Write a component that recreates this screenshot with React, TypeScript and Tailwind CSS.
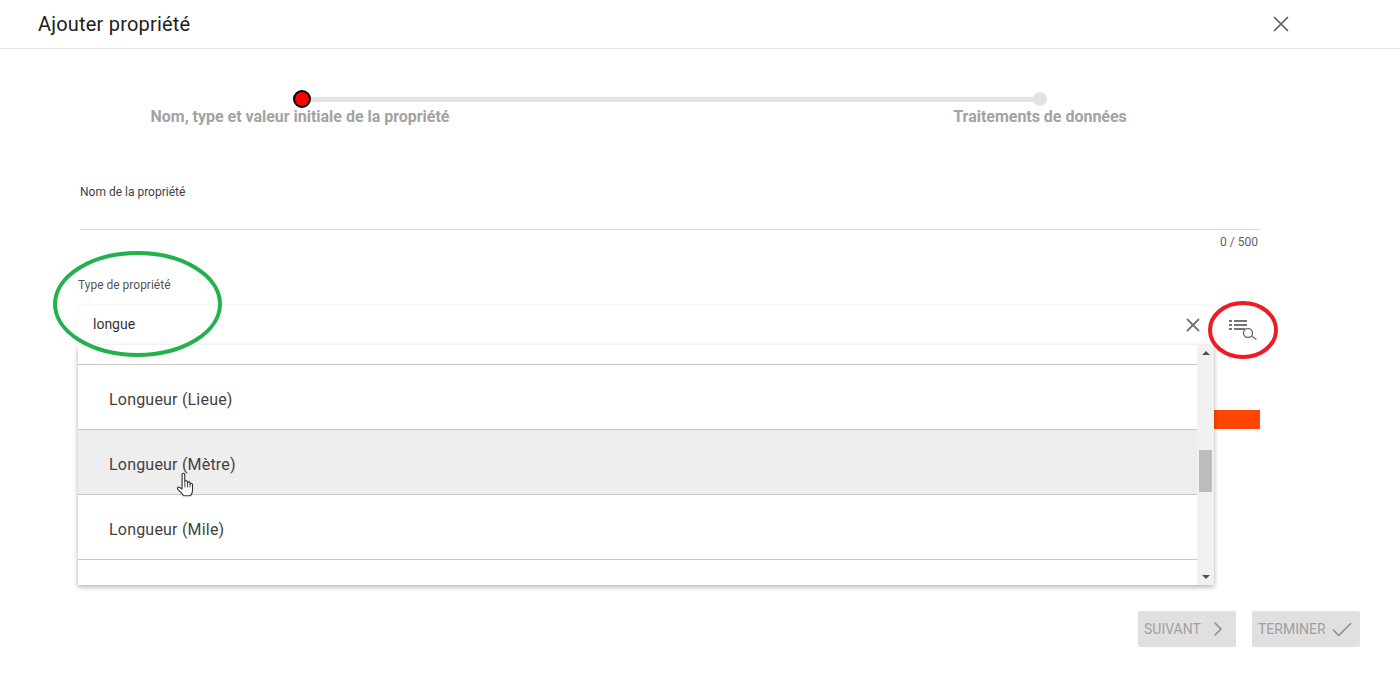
import React from "react";
import { X, ChevronRight, Check } from "lucide-react";

const ListSearchIcon = () => (
  <svg width="30" height="24" viewBox="0 0 30 24" fill="none" className="block">
    <g stroke="#757575" strokeWidth="2">
      <path d="M1 4h3M1 8h3M1 12h3" />
      <path d="M6 4h13M6 8h13M6 12h11" />
    </g>
    <circle cx="20" cy="16" r="4.5" stroke="#757575" strokeWidth="1.5" />
    <path d="M23.500 19l5 3.500" stroke="#757575" strokeWidth="1.5" />
  </svg>
);

const HandCursor = () => (
  <svg width="18" height="25" viewBox="0 0 16 22" className="block">
    <path
      d="M4.500 2.200c0-1.600 2.400-1.600 2.400 0v6.300c.4-1.200 2.400-1 2.400.3v.6c.4-1.100 2.300-.9 2.300.4v.8c.4-.9 2.200-.7 2.200.6v5.200c0 2-.9 3.200-1.700 4.600H5.800c-1-1.600-2.800-3.400-5-5.600-1.100-1.500.5-2.900 1.700-1.700l2 1.300z"
      fill="#fff"
      stroke="#333"
      strokeWidth="1"
      strokeLinejoin="round"
    />
    <path d="M7 9v4.500M9.300 9.500v4M11.600 10.500v3" stroke="#333" strokeWidth=".8" />
  </svg>
);

const options = [
  { label: "", height: "h-[20px]" },
  { label: "Longueur (Lieue)", height: "h-[65px]" },
  { label: "Longueur (Mètre)", height: "h-[65px]", hover: true },
  { label: "Longueur (Mile)", height: "h-[65px]" },
  { label: "", height: "h-[25px]", last: true },
];

const Dropdown = () => (
  <div className="absolute left-0 top-[40px] z-10 flex h-[240px] w-[1136px] bg-white shadow-[0_2px_5px_rgba(0,0,0,0.3)]">
    <div className="flex-1">
      {options.map((option, i) => (
        <div
          key={i}
          className={`relative flex items-center pt-[6px] pl-[31px] text-[16px] tracking-[0.2px] text-[#424242] ${option.height} ${
            option.last ? "" : "border-b border-[#c8c8c8]"
          } ${option.hover ? "bg-[#eeeeee]" : ""}`}
        >
          {option.label}
          {option.hover && (
            <div className="absolute left-[99px] top-[42px]">
              <HandCursor />
            </div>
          )}
        </div>
      ))}
    </div>
    <div className="flex w-[17px] flex-col items-center justify-between bg-[#f1f1f1] py-[6px]">
      <div className="h-0 w-0 border-x-[4px] border-b-[4px] border-x-transparent border-b-[#505050]" />
      <div className="absolute right-[2px] top-[105px] h-[42px] w-[13px] bg-[#bcbcbc]" />
      <div className="h-0 w-0 border-x-[4px] border-t-[4px] border-x-transparent border-t-[#505050]" />
    </div>
  </div>
);

const Stepper = () => (
  <div className="relative ml-[150px] flex w-[1040px] justify-between pt-[42px]">
    <div className="absolute left-[152px] top-[48px] h-[5px] w-[738px] bg-[#e3e3e3]" />
    <div className="absolute left-[143px] top-[41px] h-[18px] w-[18px] rounded-full border-2 border-black bg-[#ff0000]" />
    <div className="absolute left-[883px] top-[43px] h-[14px] w-[14px] rounded-full bg-[#e3e3e3]" />
    <div className="relative w-[300px] pt-[16px] text-center text-[16px] leading-[19px] font-bold tracking-[-0.02px] text-[#a3a3a3]">
      Nom, type et valeur initiale de la propriété
    </div>
    <div className="relative w-[300px] pt-[16px] text-center text-[16px] leading-[19px] font-bold tracking-[-0.02px] text-[#a3a3a3]">
      Traitements de données
    </div>
  </div>
);

export default function App() {
  return (
    <div className="relative h-[698px] w-[1400px] overflow-hidden bg-white font-['Roboto',sans-serif]">
      <header className="flex h-[49px] items-center justify-between border-b border-[#e4e4e4] pr-[106px] pl-[38px]">
        <h1 className="text-[20px] tracking-[0.2px] text-[#212121]">Ajouter propriété</h1>
        <X size={26} strokeWidth={1.6} className="text-[#616161]" />
      </header>

      <Stepper />

      <div className="mt-[59px] ml-[80px] w-[1180px]">
        <label className="block text-[12px] leading-[14px] text-[#424242]">Nom de la propriété</label>
        <div className="mt-[30px] border-b border-[#dcdcdc]" />
        <div className="mt-[5px] pr-[2px] text-right text-[12px] leading-[14px] text-[#616161]">0 / 500</div>
      </div>

      <div className="mt-[29px] ml-[78px] w-[1182px]">
        <label className="block text-[12px] leading-[14px] text-[#555555]">Type de propriété</label>
        <div className="relative mt-[13px] flex items-center">
          <div className="flex h-[40px] w-[1136px] items-center justify-between pr-[10px] pb-[1px] pl-[15px] text-[14px] text-[#333333] shadow-[0_0_2px_rgba(0,0,0,0.1)]">
            longue
            <X size={22} strokeWidth={2} className="mt-[1px] text-[#757575]" />
          </div>
          <div className="mt-[8px] ml-[14px]">
            <ListSearchIcon />
          </div>
          <Dropdown />
        </div>
        <div className="mt-[65px] ml-auto h-[19px] w-[100px] bg-[#ff4500]" />
      </div>

      <div className="mt-[182px] mr-[40px] flex justify-end gap-[16px]">
        <button className="flex h-[36px] w-[98px] items-center gap-[5px] rounded-[2px] bg-[#e0e0e0] pl-[6px] text-[14px] text-[#a0a0a0]">
          SUIVANT
          <ChevronRight size={24} strokeWidth={1.5} className="text-[#8a8a8a]" />
        </button>
        <button className="flex h-[36px] w-[108px] items-center gap-[3px] rounded-[2px] bg-[#e0e0e0] pl-[6px] text-[14px] text-[#a0a0a0]">
          TERMINER
          <Check size={26} strokeWidth={1.4} className="mt-[2px] text-[#8a8a8a]" />
        </button>
      </div>

      {/* hand drawn annotations on top of the screenshot */}
      <svg width="1400" height="698" className="pointer-events-none absolute top-0 left-0 z-20" fill="none">
        <ellipse cx="137.500" cy="304" rx="82.500" ry="51" stroke="#22b14c" strokeWidth="4" />
        <ellipse cx="1243" cy="330" rx="33" ry="27" stroke="#ed1c24" strokeWidth="4" />
      </svg>
    </div>
  );
}
